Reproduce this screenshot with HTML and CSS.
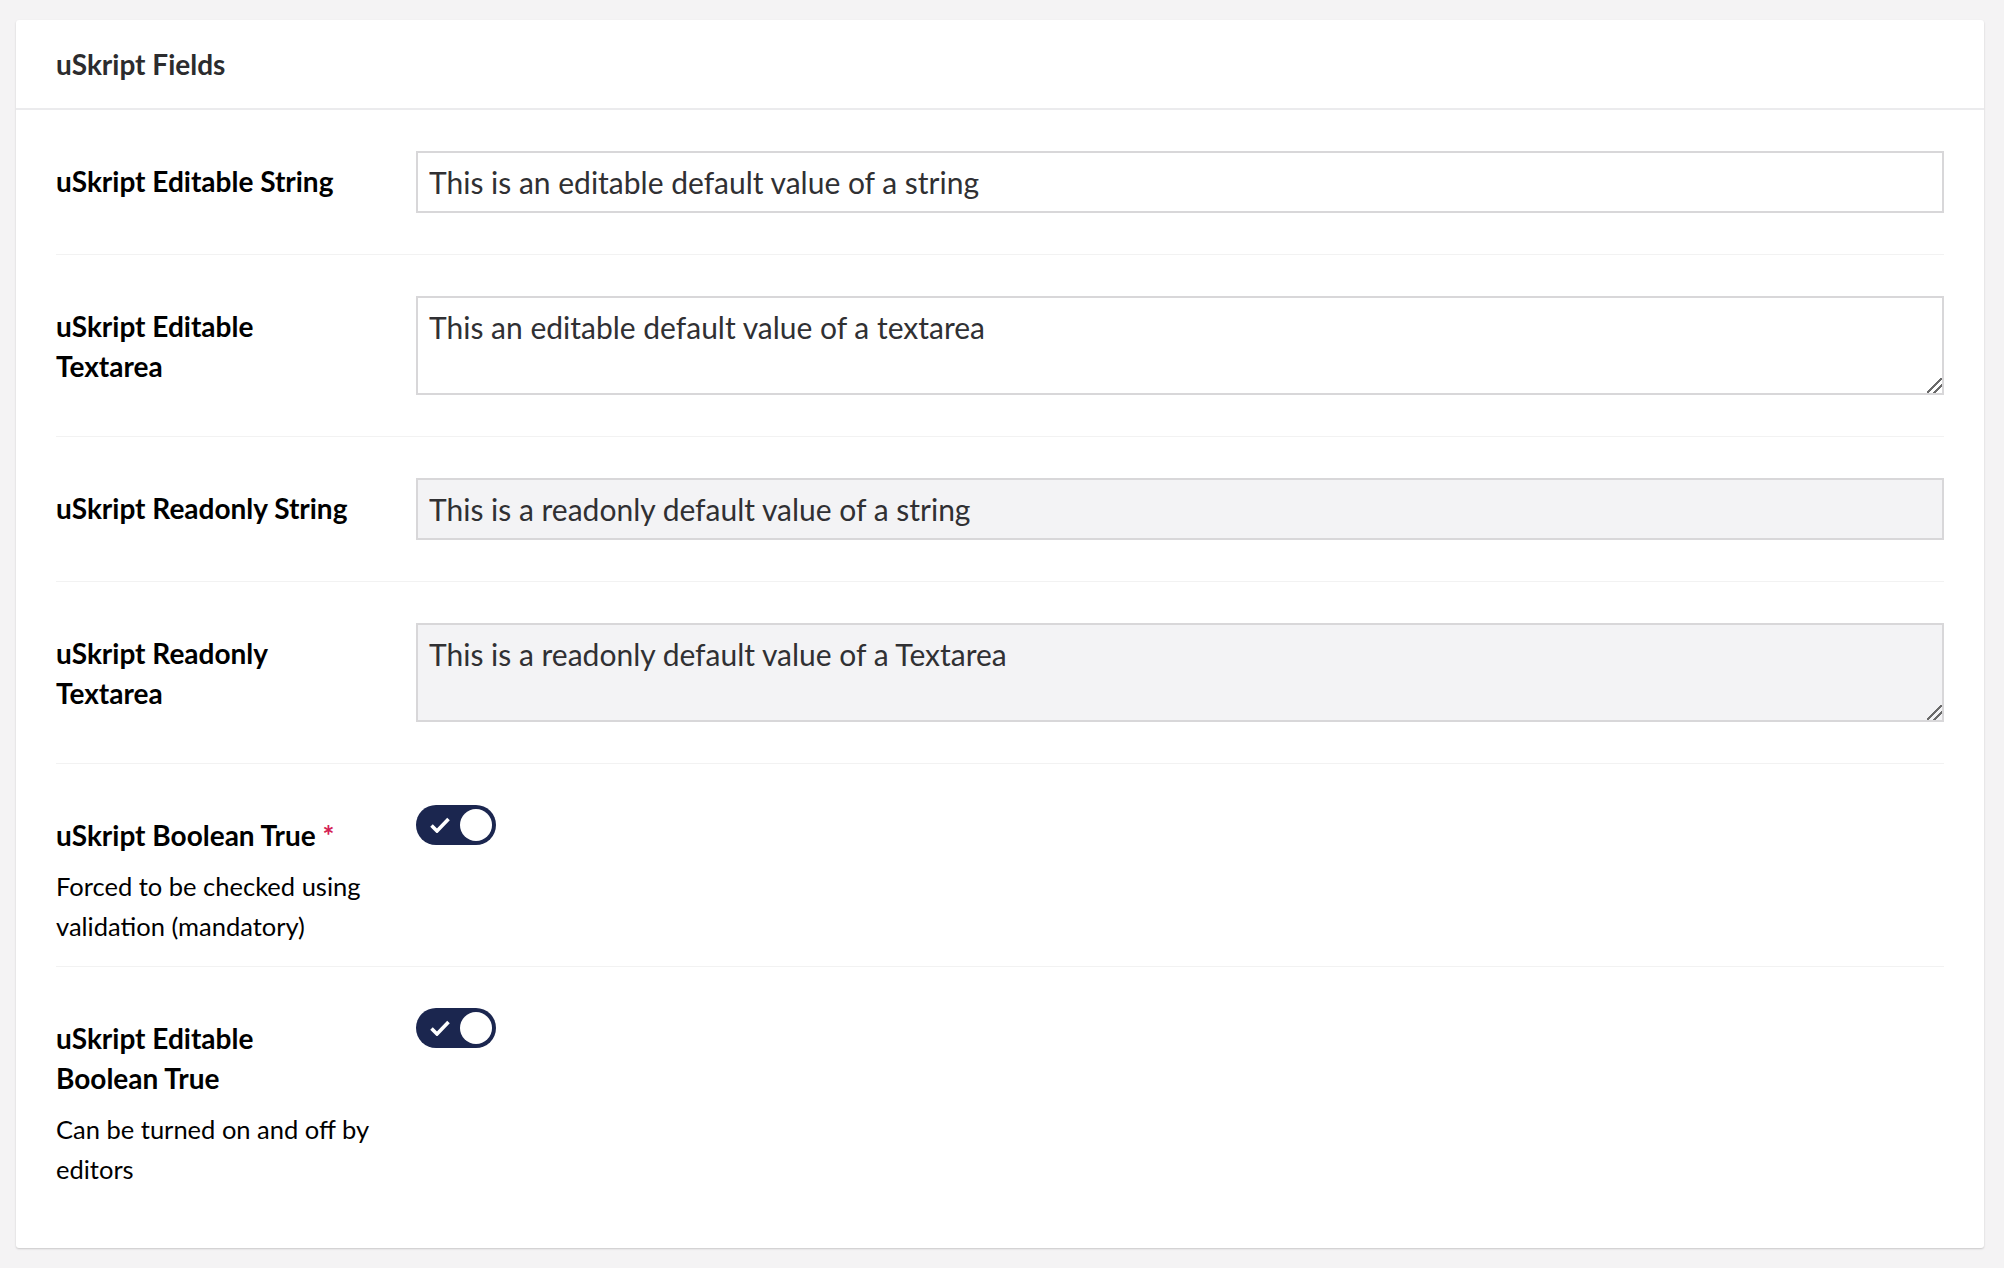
FILE: index.html
```html
<!DOCTYPE html>
<html lang="en">
<head>
<meta charset="utf-8">
<title>uSkript Fields</title>
<link rel="stylesheet" href="styles.css">
</head>
<body>
<div class="card">
  <div class="card-header">uSkript Fields</div>
  <div class="card-body">
    <div class="row">
      <div class="label-col"><label class="label">uSkript Editable String</label></div>
      <div class="editor-col"><input class="text-input" type="text" value="This is an editable default value of a string"></div>
    </div>
    <div class="row">
      <div class="label-col"><label class="label">uSkript Editable Textarea</label></div>
      <div class="editor-col"><textarea class="text-area">This an editable default value of a textarea</textarea></div>
    </div>
    <div class="row">
      <div class="label-col"><label class="label">uSkript Readonly String</label></div>
      <div class="editor-col"><input class="text-input readonly" type="text" readonly value="This is a readonly default value of a string"></div>
    </div>
    <div class="row">
      <div class="label-col"><label class="label">uSkript Readonly Textarea</label></div>
      <div class="editor-col"><textarea class="text-area readonly" readonly>This is a readonly default value of a Textarea</textarea></div>
    </div>
    <div class="row">
      <div class="label-col">
        <label class="label">uSkript Boolean True <span class="req">*</span></label>
        <div class="desc">Forced to be checked using validation (mandatory)</div>
      </div>
      <div class="editor-col">
        <div class="toggle">
          <svg class="check" width="20" height="16" viewBox="0 0 20 16"><path d="M1.5 8.5 L7 14 L18.5 2" fill="none" stroke="#fff" stroke-width="3.6" stroke-linejoin="miter"/></svg>
          <span class="knob"></span>
        </div>
      </div>
    </div>
    <div class="row last">
      <div class="label-col">
        <label class="label">uSkript Editable Boolean True</label>
        <div class="desc">Can be turned on and off by editors</div>
      </div>
      <div class="editor-col">
        <div class="toggle">
          <svg class="check" width="20" height="16" viewBox="0 0 20 16"><path d="M1.5 8.5 L7 14 L18.5 2" fill="none" stroke="#fff" stroke-width="3.6" stroke-linejoin="miter"/></svg>
          <span class="knob"></span>
        </div>
      </div>
    </div>
  </div>
</div>
</body>
</html>
```
FILE: styles.css
```css
* { box-sizing: border-box; }
html, body { margin: 0; padding: 0; }
body {
  background: #f4f3f4;
  font-family: Lato, "Open Sans", sans-serif;
  padding: 20px 20px 0 16px;
  height: 1268px;
}
.card {
  background: #fff;
  border-radius: 3px;
  box-shadow: 0 1px 2px rgba(0,0,0,0.18);
}
.card-header {
  height: 90px;
  border-bottom: 2px solid #ebebed;
  padding: 0 40px;
  display: flex;
  align-items: center;
  font-size: 28px;
  font-weight: 700;
  color: #2c2c2e;
}
.card-body {
  padding: 0 40px 39px 40px;
}
.row {
  display: flex;
  padding: 41px 0 20px;
  border-bottom: 1px solid #f2f2f2;
}
.row.last { border-bottom: none; }
.label-col {
  width: 360px;
  flex: none;
  padding-top: 10px;
  padding-right: 40px;
}
.label {
  display: block;
  max-width: 300px;
  font-size: 28px;
  font-weight: 700;
  line-height: 40px;
  color: #000;
}
.req { color: #d42054; font-weight: 700; }
.desc {
  margin-top: 11px;
  font-size: 25.5px;
  line-height: 40px;
  color: #000;
}
.editor-col {
  flex: 1;
  padding-bottom: 21px;
}
.text-input, .text-area {
  display: block;
  width: 100%;
  border: 2px solid #d8d7d9;
  border-radius: 0;
  background: #fff;
  font-family: Lato, "Open Sans", sans-serif;
  font-size: 30px;
  color: #303033;
  padding: 0 11px;
  margin: 0;
  outline: none;
}
.text-input { height: 62px; }
.text-area {
  height: 99px;
  padding: 10px 11px;
  line-height: 38px;
  resize: vertical;
}
.text-area::-webkit-resizer {
  background:
    linear-gradient(135deg,
      transparent 0, transparent 46%,
      #6a6a6a 46%, #6a6a6a 56%,
      transparent 56%, transparent 70%,
      #6a6a6a 70%, #6a6a6a 80%,
      transparent 80%);
}
.readonly { background: #f3f3f5; }
.toggle {
  width: 80px;
  height: 40px;
  border-radius: 20px;
  background: #1b264f;
  display: flex;
  align-items: center;
  justify-content: space-between;
  padding: 0 4px 0 14px;
}
.check { display: block; }
.knob {
  width: 32px;
  height: 32px;
  border-radius: 50%;
  background: #fff;
}
```
